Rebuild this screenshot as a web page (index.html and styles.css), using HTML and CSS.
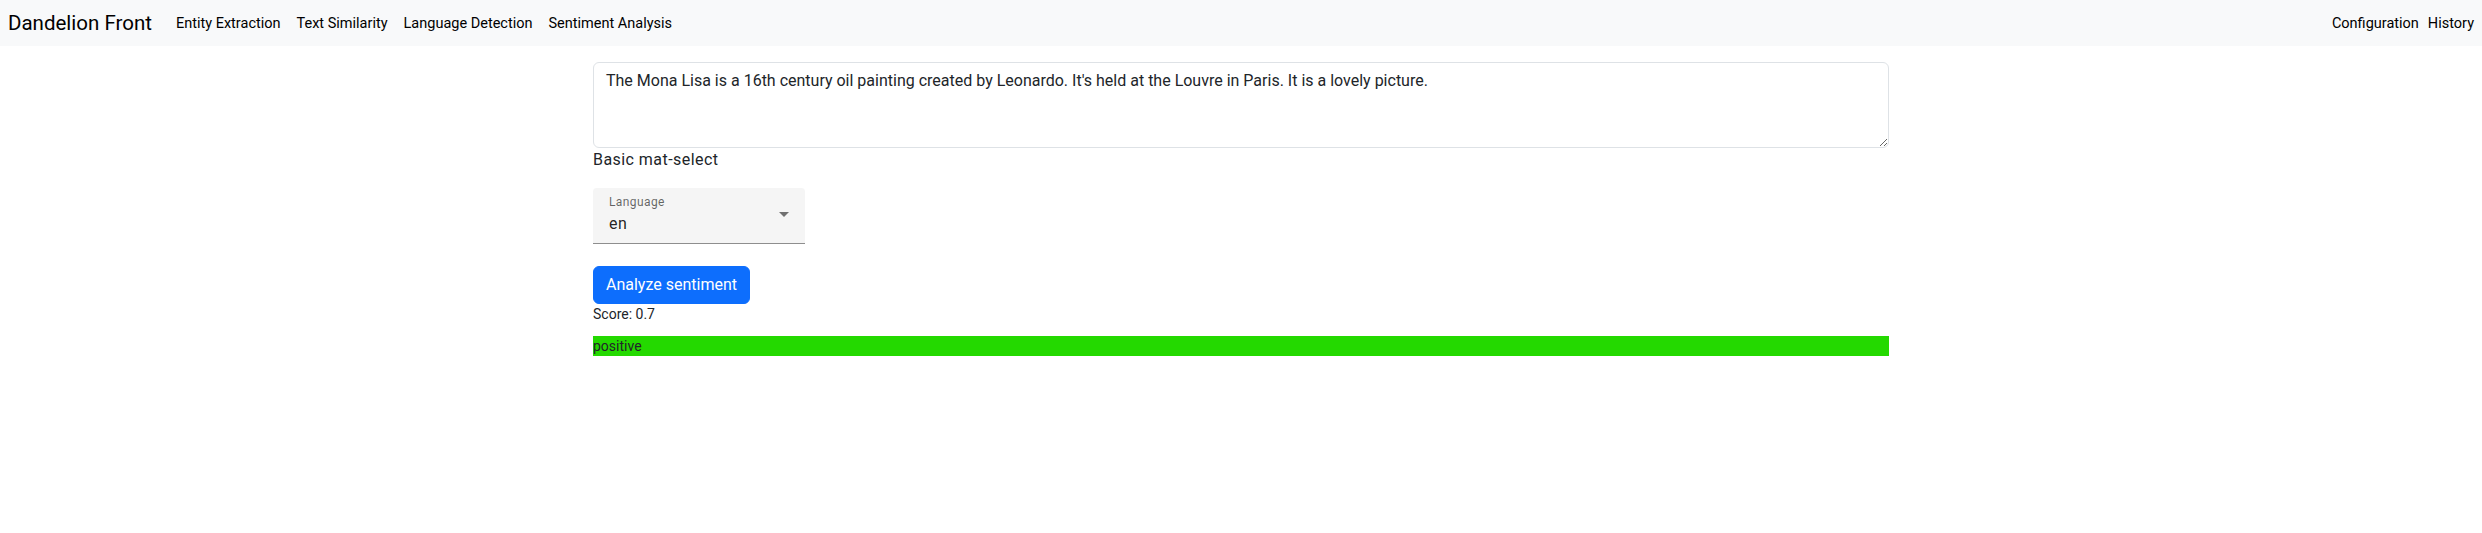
FILE: index.html
```html
<!DOCTYPE html>
<html lang="en">
<head>
<meta charset="utf-8">
<title>Dandelion Front</title>
<link rel="stylesheet" href="styles.css">
</head>
<body>
<nav class="navbar">
  <a class="brand">Dandelion Front</a>
  <div class="nav-left">
    <a class="nav-link">Entity Extraction</a>
    <a class="nav-link">Text Similarity</a>
    <a class="nav-link">Language Detection</a>
    <a class="nav-link">Sentiment Analysis</a>
  </div>
  <div class="nav-right">
    <a class="nav-link-r">Configuration</a>
    <a class="nav-link-r">History</a>
  </div>
</nav>
<main class="container">
  <textarea class="form-control" rows="3">The Mona Lisa is a 16th century oil painting created by Leonardo. It's held at the Louvre in Paris. It is a lovely picture.</textarea>
  <p class="select-title">Basic mat-select</p>
  <div class="form-field">
    <div class="field-box">
      <div class="field-infix">
        <span class="field-label">Language</span>
        <span class="field-value">en</span>
      </div>
      <span class="arrow"></span>
    </div>
    <div class="subscript"></div>
  </div>
  <button class="btn">Analyze sentiment</button>
  <p class="score">Score: 0.7</p>
  <div class="bar">positive</div>
</main>
</body>
</html>
```
FILE: styles.css
```css
html, body {
  margin: 0;
  padding: 0;
  background: #ffffff;
}
body {
  font-family: Roboto, "Helvetica Neue", sans-serif;
  color: #212529;
}
.navbar {
  height: 46px;
  background: #f8f9fa;
  display: flex;
  align-items: center;
  padding: 0 8px 0 8px;
}
.brand {
  font-size: 20.5px;
  color: #000;
  margin-right: 16px;
  line-height: 30px;
}
.nav-left {
  display: flex;
}
.nav-link {
  font-size: 14.5px;
  padding: 0 8px;
  color: #000;
}
.nav-right {
  margin-left: auto;
  display: flex;
  gap: 9px;
}
.nav-link-r {
  font-size: 14.5px;
  color: #000;
}
.container {
  width: 1296px;
  margin: 16px auto 0;
  display: flex;
  flex-direction: column;
  align-items: flex-start;
}
.form-control {
  box-sizing: border-box;
  width: 100%;
  height: 86px;
  padding: 6px 12px;
  font-family: Roboto, "Helvetica Neue", sans-serif;
  font-size: 16px;
  line-height: 24px;
  color: #212529;
  border: 1px solid #dee2e6;
  border-radius: 6px;
  margin: 0;
  display: block;
}
.select-title {
  margin: 0 0 16px;
  font-size: 16px;
  line-height: 24px;
  letter-spacing: 0.45px;
}
.form-field {
  width: 212px;
  display: flex;
  flex-direction: column;
}
.field-box {
  height: 56px;
  box-sizing: border-box;
  background: #f5f5f5;
  border-radius: 4px 4px 0 0;
  border-bottom: 1px solid rgba(0,0,0,0.42);
  display: flex;
  align-items: center;
  padding: 0 16px;
}
.field-infix {
  flex: 1;
  align-self: flex-start;
  display: flex;
  flex-direction: column;
  padding-top: 6px;
}
.field-label {
  font-size: 12px;
  line-height: 16px;
  color: rgba(0,0,0,0.6);
  letter-spacing: 0.4px;
  margin-bottom: 2px;
}
.field-value {
  font-size: 16px;
  line-height: 24px;
  color: rgba(0,0,0,0.87);
  letter-spacing: 0.5px;
}
.arrow {
  width: 0;
  height: 0;
  border-left: 5px solid transparent;
  border-right: 5px solid transparent;
  border-top: 5px solid rgba(0,0,0,0.54);
  margin-top: -2px;
}
.subscript {
  height: 22px;
}
.btn {
  font-family: Roboto, "Helvetica Neue", sans-serif;
  font-size: 16px;
  line-height: 24px;
  padding: 6px 12px;
  border: 1px solid #0d6efd;
  background: #0d6efd;
  color: #fff;
  border-radius: 6px;
  margin: 0;
}
.score {
  margin: 0 0 12px;
  font-size: 14px;
  line-height: 20px;
}
.bar {
  width: 100%;
  height: 20px;
  background: #24d900;
  font-size: 14px;
  line-height: 20px;
}
```
